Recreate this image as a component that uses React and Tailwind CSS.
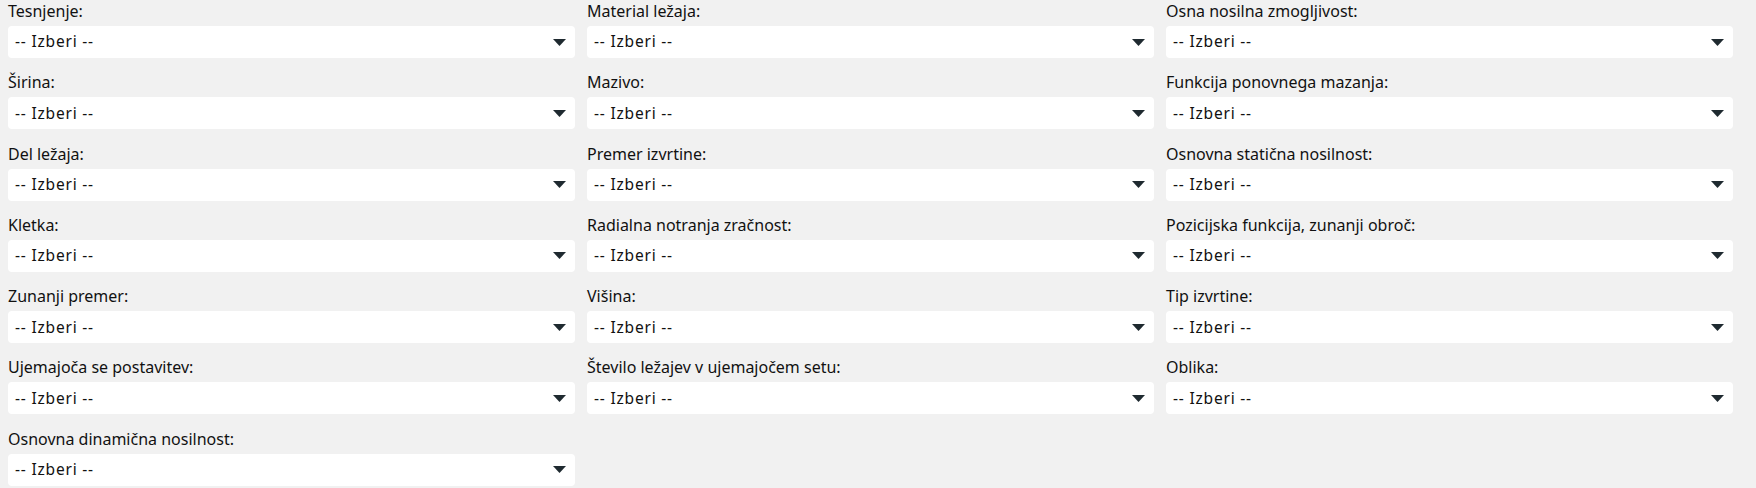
import React from "react";

const labels = [
  "Tesnjenje:", "Material ležaja:", "Osna nosilna zmogljivost:",
  "Širina:", "Mazivo:", "Funkcija ponovnega mazanja:",
  "Del ležaja:", "Premer izvrtine:", "Osnovna statična nosilnost:",
  "Kletka:", "Radialna notranja zračnost:", "Pozicijska funkcija, zunanji obroč:",
  "Zunanji premer:", "Višina:", "Tip izvrtine:",
  "Ujemajoča se postavitev:", "Število ležajev v ujemajočem setu:", "Oblika:",
  "Osnovna dinamična nosilnost:",
];

function Field({ label }) {
  return (
    <div className="flex flex-col">
      <label className="block text-[16px] leading-[22px] mb-[4px] text-[#111111]">{label}</label>
      <div className="h-8 bg-white rounded-[4px] flex items-center justify-between pl-[7px] pr-[9px] text-[15.5px] text-[#111111]">
        <span className="tracking-[0.8px]">-- Izberi --</span>
        <svg width="13" height="7" viewBox="0 0 13 7"><polygon points="0,0 13,0 6.5,7" fill="#1f2a30" /></svg>
      </div>
    </div>
  );
}

export default function App() {
  return (
    <div className="min-h-[488px] bg-[#f1f1f1] pl-2" style={{ fontFamily: '"Noto Sans", sans-serif' }}>
      <div className="grid grid-cols-3 w-[1725px] gap-x-[12px] gap-y-[13.3px]">
        {labels.map((l) => <Field key={l} label={l} />)}
      </div>
    </div>
  );
}
